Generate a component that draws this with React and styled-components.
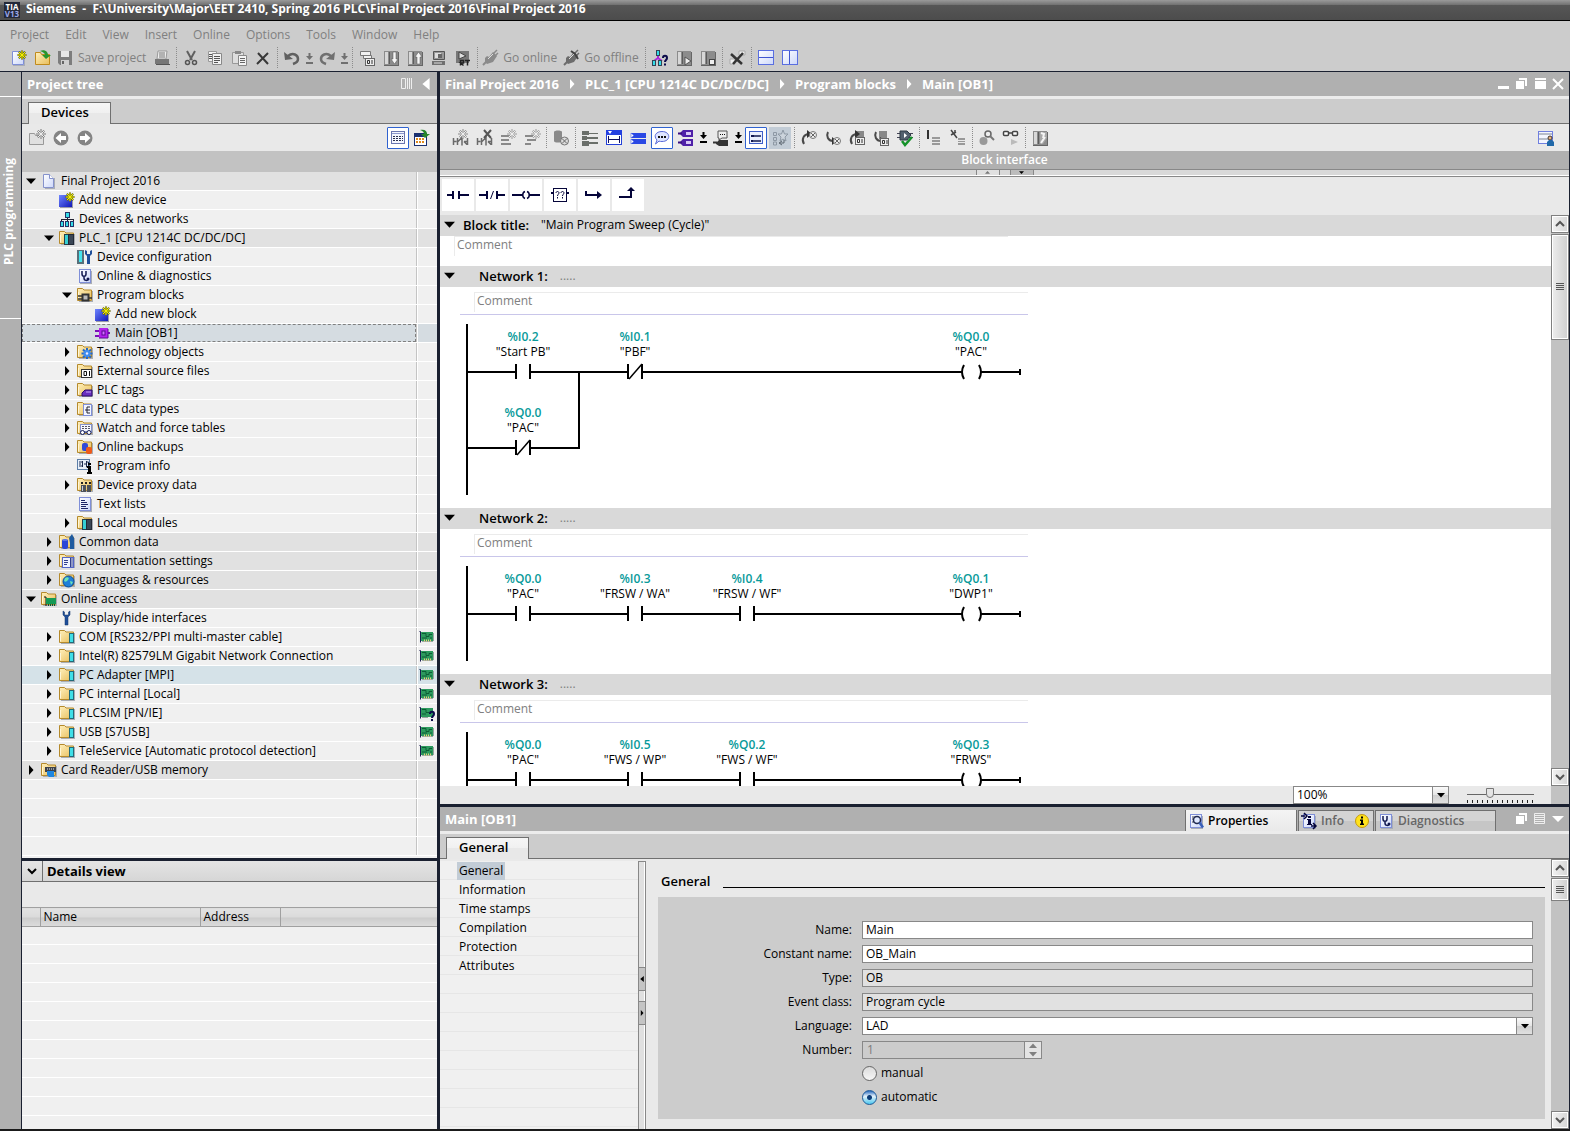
import React, { useState } from "react";
import styled, { createGlobalStyle, css } from "styled-components";

const MENU = [
  "Project",
  "Edit",
  "View",
  "Insert",
  "Online",
  "Options",
  "Tools",
  "Window",
  "Help",
];

const TREE = [
  { level: 0, open: true, icon: "page", label: "Final Project 2016", group: true },
  { level: 1, icon: "add", label: "Add new device" },
  { level: 1, icon: "network", label: "Devices & networks" },
  { level: 1, open: true, icon: "plc", label: "PLC_1 [CPU 1214C DC/DC/DC]", group: true, strong: true },
  { level: 2, icon: "config", label: "Device configuration" },
  { level: 2, icon: "diag", label: "Online & diagnostics" },
  { level: 2, open: true, icon: "blocks", label: "Program blocks" },
  { level: 3, icon: "add", label: "Add new block" },
  { level: 3, icon: "ob", label: "Main [OB1]", selected: true },
  { level: 2, open: false, icon: "tech", label: "Technology objects" },
  { level: 2, open: false, icon: "source", label: "External source files" },
  { level: 2, open: false, icon: "tags", label: "PLC tags" },
  { level: 2, open: false, icon: "types", label: "PLC data types" },
  { level: 2, open: false, icon: "watch", label: "Watch and force tables" },
  { level: 2, open: false, icon: "backup", label: "Online backups" },
  { level: 2, icon: "info", label: "Program info" },
  { level: 2, open: false, icon: "proxy", label: "Device proxy data" },
  { level: 2, icon: "text", label: "Text lists" },
  { level: 2, open: false, icon: "plc", label: "Local modules" },
  { level: 1, open: false, icon: "common", label: "Common data", group: true },
  { level: 1, open: false, icon: "docs", label: "Documentation settings", group: true },
  { level: 1, open: false, icon: "globe", label: "Languages & resources", group: true },
  { level: 0, open: true, icon: "access", label: "Online access", group: true },
  { level: 1, icon: "wrench", label: "Display/hide interfaces" },
  { level: 1, open: false, icon: "iface", label: "COM [RS232/PPI multi-master cable]", card: "card" },
  { level: 1, open: false, icon: "iface", label: "Intel(R) 82579LM Gigabit Network Connection", card: "card" },
  { level: 1, open: false, icon: "iface", label: "PC Adapter [MPI]", card: "card", hover: true },
  { level: 1, open: false, icon: "iface", label: "PC internal [Local]", card: "card" },
  { level: 1, open: false, icon: "iface", label: "PLCSIM [PN/IE]", card: "cardUnknown" },
  { level: 1, open: false, icon: "iface", label: "USB [S7USB]", card: "card" },
  { level: 1, open: false, icon: "iface", label: "TeleService [Automatic protocol detection]", card: "card" },
  { level: 0, open: false, icon: "reader", label: "Card Reader/USB memory", group: true },
  { level: 0, label: "" },
  { level: 0, label: "" },
  { level: 0, label: "" },
  { level: 0, label: "" },
];

const NETWORKS = [
  {
    id: 1,
    height: 193,
    rail: 180,
    rungs: [
      {
        y: 57,
        end: 560,
        items: [
          { x: 63, type: "no", address: "%I0.2", tag: "Start PB" },
          { x: 175, type: "nc", address: "%I0.1", tag: "PBF" },
          { x: 511, type: "coil", address: "%Q0.0", tag: "PAC" },
        ],
      },
      {
        y: 133,
        end: 119,
        joinTo: 57,
        items: [{ x: 63, type: "nc", address: "%Q0.0", tag: "PAC" }],
      },
    ],
  },
  {
    id: 2,
    height: 117,
    rail: 104,
    rungs: [
      {
        y: 57,
        end: 560,
        items: [
          { x: 63, type: "no", address: "%Q0.0", tag: "PAC" },
          { x: 175, type: "no", address: "%I0.3", tag: "FRSW / WA" },
          { x: 287, type: "no", address: "%I0.4", tag: "FRSW / WF" },
          { x: 511, type: "coil", address: "%Q0.1", tag: "DWP1" },
        ],
      },
    ],
  },
  {
    id: 3,
    height: 117,
    rail: 104,
    rungs: [
      {
        y: 57,
        end: 560,
        items: [
          { x: 63, type: "no", address: "%Q0.0", tag: "PAC" },
          { x: 175, type: "no", address: "%I0.5", tag: "FWS / WP" },
          { x: 287, type: "no", address: "%Q0.2", tag: "FWS / WF" },
          { x: 511, type: "coil", address: "%Q0.3", tag: "FRWS" },
        ],
      },
    ],
  },
];

const NAV = [
  "General",
  "Information",
  "Time stamps",
  "Compilation",
  "Protection",
  "Attributes",
];

/* ---------- icons, all on a 16 x 16 grid ---------- */

const folder = (
  <>
    <path d="M2 15h14V4h-1v10H2z" fill="#a9adb5" />
    <path d="M.5 13.500V1.500h5l1.500 1.500h7.500v10.500z" fill="url(#gFolder)" stroke="#b58a2c" />
    <path d="M1.500 12.500V5" stroke="#fff6d8" fill="none" />
  </>
);

const sheet = (
  <>
    <path d="M3 16h12V3h-1v12H3z" fill="#a9adb5" />
    <rect x="2.500" y="1.500" width="11" height="13" fill="url(#gSheet)" stroke="#7f8fd8" />
  </>
);

const spark = (x, y, color = "#f4f000", edge = "#6a6a10") => (
  <g transform={`translate(${x} ${y})`}>
    <path d="M0-4.500V4.500M-4.500 0H4.500M-3.200-3.200L3.200 3.200M3.200-3.200L-3.200 3.200" stroke={edge} strokeWidth="2" />
    <path d="M0-4V4M-4 0H4M-3-3L3 3M3-3L-3 3" stroke={color} strokeWidth="1" />
  </g>
);

const grayBars = (
  <path d="M1 5h10v2H1zM1 9h8v2H1zM1 13h10v2H1z" fill="#8a8a8a" />
);

const moduleBox = (
  <>
    <path d="M1 1h14v14H1z" fill="#8c8c8c" />
    <path d="M2 2h3v12H2z" fill="#d8d8d8" />
    <path d="M6 2h1v12H6z" fill="#5c5c5c" />
    <path d="M1 15h14v1H1zM15 2h1v14h-1z" fill="#666" />
  </>
);

const curve = (down) => (
  <>
    <path d={down ? "M3 2C1 6 3 11 8 11" : "M3 14C0 9 3 4 8 4"} stroke="#4a4a4a" strokeWidth="2" fill="none" />
    <path d={down ? "M7 7l5 4-5 4z" : "M6 0l5 4-5 4z"} fill="#333" />
  </>
);

const plug = (color) => (
  <>
    <path d="M1 15l4-4" stroke={color} strokeWidth="2" />
    <path d="M3 8l2-2 2 1 4-5 4 4-4 6-6 2-2-2z" fill={color} />
    <path d="M11 4l4-4M13 6l3-3" stroke={color} strokeWidth="1.500" />
    <path d="M6 9l5-5" stroke="#ddd" />
  </>
);

const ART = {
  page: (
    <>
      <path d="M4 16h10V5h-1v10H4z" fill="#a9adb5" />
      <path d="M2.500 1.500h6l4 4v9h-10z" fill="url(#gSheet)" stroke="#8592cc" />
      <path d="M8.500 1.500v4h4" fill="#fff" stroke="#8592cc" />
    </>
  ),
  add: (
    <>
      <path d="M1 15h12V6h1v10H1z" fill="#9a9aa8" />
      <rect x="0" y="3" width="13" height="12" fill="url(#gBlue)" />
      {spark(11, 5)}
    </>
  ),
  network: (
    <g shapeRendering="crispEdges">
      <path d="M8 5v4M2 11V8h12v3M8 8v3" stroke="#223" fill="none" />
      <rect x="6" y="1" width="4" height="5" fill="#35dce8" stroke="#236" />
      <rect x="1" y="10" width="3" height="5" fill="#35dce8" stroke="#236" />
      <rect x="6" y="10" width="3" height="5" fill="#35dce8" stroke="#236" />
      <rect x="11" y="10" width="3" height="5" fill="#35dce8" stroke="#236" />
    </g>
  ),
  plc: (
    <>
      {folder}
      <rect x="5.500" y="4.500" width="4" height="10" fill="#37cfd4" stroke="#27404a" />
      <rect x="9.500" y="4.500" width="5" height="10" fill="#3a4656" stroke="#222a36" />
    </>
  ),
  config: (
    <>
      <rect x="0" y="1" width="7" height="14" fill="#57707a" />
      <rect x="2" y="2" width="3" height="11" fill="#45e4ee" />
      <path d="M8 1v4l2 2v8h3V7l2-2V1l-2 1v3h-3V2z" fill="#1f4f9a" />
    </>
  ),
  diag: (
    <>
      {sheet}
      <path d="M5 3v3c0 3 4 3 4 0V3M7 8v2c0 3 4 3 4 1" stroke="#111850" strokeWidth="1.500" fill="none" />
      <circle cx="11" cy="11" r="1.500" fill="#111850" />
    </>
  ),
  blocks: (
    <>
      {folder}
      <path d="M1 9h4M1 12h4M12 11h3" stroke="#333" strokeWidth="1.500" />
      <rect x="5.500" y="7.500" width="6" height="6" fill="#bbb" stroke="#333" strokeWidth="2" />
    </>
  ),
  ob: (
    <>
      <path d="M0 5h5v2H0zM0 10h5v2H0zM12 7h3v2h-3z" fill="#7a10b8" />
      <rect x="4" y="3" width="9" height="10" fill="#b321ee" />
      <path d="M4 13h9V4" stroke="#5a0a90" fill="none" />
      <rect x="7" y="6" width="3" height="4" fill="#d070ff" stroke="#5a0a90" />
    </>
  ),
  tech: (
    <>
      {folder}
      <path d="M10 4v11M4.500 9.500h11M6 5.500l8 8M14 5.500l-8 8" stroke="#2468c8" strokeWidth="2" />
      <circle cx="10" cy="9.500" r="3.500" fill="#3f8df0" />
      <circle cx="10" cy="9.500" r="1.200" fill="#eef" />
    </>
  ),
  source: (
    <>
      {folder}
      <rect x="4.500" y="6.500" width="10" height="8" fill="#fff" stroke="#333" />
      <path d="M7 8.500h2.500v4H7zM12.500 8v5" stroke="#111" fill="none" />
    </>
  ),
  tags: (
    <>
      {folder}
      <path d="M5 11l3-3h7v6H5z" fill="#6a2fc0" stroke="#2c0f66" />
      <path d="M9 10h5" stroke="#c5a5f2" />
    </>
  ),
  types: (
    <>
      {folder}
      <rect x="6.500" y="3.500" width="8" height="11" fill="#f2f5ff" stroke="#7f8fd8" />
      <path d="M8 9h2M10 6v6M10 6h3M10 9h3M10 12h3" stroke="#223" />
    </>
  ),
  watch: (
    <>
      {folder}
      <rect x="3.500" y="4.500" width="11" height="8" fill="#f5f7ff" stroke="#8592cc" />
      <path d="M5 6.500h8M5 8.500h8" stroke="#556" strokeDasharray="2 1" />
      <circle cx="5.500" cy="12.500" r="2" fill="#fff" stroke="#15205c" />
      <circle cx="12" cy="12.500" r="2" fill="#fff" stroke="#15205c" />
      <path d="M7 12h3" stroke="#15205c" />
    </>
  ),
  backup: (
    <>
      {folder}
      <rect x="5" y="4" width="6" height="8" rx="2" fill="#3048d8" />
      <rect x="9" y="8" width="6" height="7" rx="2" fill="#ee5a1c" />
    </>
  ),
  info: (
    <>
      <rect x=".5" y="1.500" width="12" height="10" fill="#e8f0fa" stroke="#5c7ea8" />
      <path d="M2 4h3M2 6h2M2 8h3M5.500 3v6M7 6h2M9.500 3v6h2V4h-2" stroke="#1a2a50" fill="none" />
      <path d="M11 5h3v2h-3zM10 8h4v6h1v2h-5v-2h1v-4h-1z" fill="#000" />
    </>
  ),
  proxy: (
    <>
      {folder}
      <path d="M4 5h2v2H4zM8 5h2v2H8zM12 5h2v2h-2z" fill="#222" />
      <path d="M4 8h5v7H4zM10 8h4v7h-4z" fill="#4c525a" />
      <path d="M5 9h1v5H5z" fill="#c9ced6" />
    </>
  ),
  text: (
    <>
      {sheet}
      <path d="M4 4.500h4M4 6.500h6M4 8.500h7M4 10.500h5M4 12.500h7" stroke="#1c2466" />
    </>
  ),
  common: (
    <>
      {folder}
      <rect x="3" y="5" width="6" height="10" rx="2" fill="#2b46d6" />
      <path d="M4 6h4" stroke="#8ea2f5" />
      <path d="M10 4l3-4 2 4v11h-4V9z" fill="#1f5ba0" />
    </>
  ),
  docs: (
    <>
      {folder}
      <rect x="3.500" y="4.500" width="11" height="10" fill="#eef2ff" stroke="#5466c8" />
      <path d="M5 7.500h4M5 9.500h4M5 11.500h3M11.500 5v9M13 5v9" stroke="#33408c" />
    </>
  ),
  globe: (
    <>
      {folder}
      <circle cx="9.500" cy="9.500" r="5.500" fill="#1f7fd8" stroke="#0d4c94" />
      <path d="M6 6c3-2 5 0 3 2S7 10 5 9zM11 9l3 1-2 3z" fill="#6fe3b4" />
    </>
  ),
  access: (
    <>
      {folder}
      <path d="M3 6h2v9" stroke="#111" fill="none" />
      <rect x="5" y="7" width="10" height="6" fill="#159a55" />
      <path d="M7 14h8" stroke="#0a5a30" strokeDasharray="1 1" strokeWidth="2" />
    </>
  ),
  wrench: (
    <path d="M4 1v4l2 2v8h3V7l2-2V1L9.500 2v3h-4V2z" fill="#1f4f9a" stroke="#123468" strokeWidth=".5" />
  ),
  iface: (
    <>
      {folder}
      <rect x="10.500" y="4.500" width="4" height="9" fill="#3fdfe8" stroke="#226a78" />
    </>
  ),
  reader: (
    <>
      {folder}
      <path d="M4 5h11v5H4z" fill="#3c424c" />
      <path d="M6 7h8" stroke="#e8edf4" strokeDasharray="1 1" />
      <path d="M6 9h7v6H8l-2-2z" fill="#1e86e0" />
    </>
  ),
  card: (
    <>
      <path d="M.5 2.500h1v11" stroke="#1a1a50" fill="none" />
      <path d="M3 12h12V4h-1v9H3z" fill="#9aa5a0" />
      <rect x="2" y="3" width="12" height="9" fill="#2c9a5e" />
      <path d="M3 4.500h4v3h3v-2h3M3 9h5M11 9h2" stroke="#0d5c34" fill="none" />
      <path d="M5 11.500h8" stroke="#e2d27a" strokeWidth="2" strokeDasharray="1 1" />
    </>
  ),
  cardUnknown: (
    <>
      <path d="M.5 2.500h1v11" stroke="#1a1a50" fill="none" />
      <path d="M3 12h6v1H3z" fill="#9aa5a0" />
      <rect x="2" y="3" width="12" height="9" fill="#2c9a5e" />
      <path d="M3 4.500h4v3h3M3 9h4" stroke="#0d5c34" fill="none" />
      <path d="M11 9c0-3 4-3 4 0 0 2-2 2-2 4M13 14v2" stroke="#0b0b4a" strokeWidth="2" fill="none" />
    </>
  ),
  newProject: (
    <>
      <path d="M2 16h12V6h-1v9H2z" fill="#a9adb5" />
      <path d="M1.500 1.500h11v13h-11z" fill="url(#gSheet)" stroke="#7f8fd8" />
      {spark(11, 5)}
    </>
  ),
  openProject: (
    <>
      <path d="M.5 14.500V2.500h5l1 2h8v10z" fill="url(#gFolder)" stroke="#c08a1c" />
      <path d="M5 1c5-2 8 1 8 4h3l-5 4-4-4h3c0-2-2-3-5-4z" fill="#28962c" />
    </>
  ),
  save: (
    <>
      <path d="M1 1h14v14H3l-2-2z" fill="#7d7d7d" />
      <path d="M4 1h8v6H4z" fill="#e6e6e6" />
      <path d="M4 10h8v5H4z" fill="#d0d0d0" />
      <path d="M5 11h2v3H5z" fill="#666" />
    </>
  ),
  print: (
    <>
      <path d="M4 1h9l-1 8H3z" fill="#eee" stroke="#999" />
      <path d="M5 3h6M5 5h6M5 7h6" stroke="#777" />
      <path d="M1 9h14v5H1z" fill="#777" />
      <path d="M2 14h14v1H2z" fill="#555" />
    </>
  ),
  cut: (
    <>
      <path d="M4 1l5 9M12 1L7 10" stroke="#606060" strokeWidth="2" />
      <circle cx="4.500" cy="12.500" r="2" stroke="#555" strokeWidth="1.500" fill="none" />
      <circle cx="11.500" cy="12.500" r="2" stroke="#555" strokeWidth="1.500" fill="none" />
    </>
  ),
  copy: (
    <>
      <path d="M1.500 1.500h8v10h-8z" fill="#f2f2f2" stroke="#999" />
      <path d="M5.500 3.500h9v11h-9z" fill="#f2f2f2" stroke="#888" />
      <path d="M7 6.500h6M7 8.500h6M7 10.500h6M7 12.500h4M2 4.500h3M2 6.500h3M2 8.500h3" stroke="#555" />
    </>
  ),
  paste: (
    <>
      <path d="M1.500 2.500h11v11h-11z" fill="#dedede" stroke="#999" />
      <path d="M4 1h6v3H4z" fill="#888" />
      <path d="M7.500 5.500h8v10h-8z" fill="#f4f4f4" stroke="#888" />
      <path d="M9 8.500h5M9 10.500h5M9 12.500h5" stroke="#666" />
    </>
  ),
  remove: (
    <path d="M3 3l10 11M13 3L2 14" stroke="#383838" strokeWidth="2" />
  ),
  undo: (
    <>
      <path d="M4 6c5-4 10-1 10 3 0 2-2 4-5 5" stroke="#606060" strokeWidth="2.500" fill="none" />
      <path d="M0 2l1 8 8-1z" fill="#606060" />
    </>
  ),
  redo: (
    <>
      <path d="M12 6C7 2 2 5 2 9c0 2 2 4 5 5" stroke="#707070" strokeWidth="2.500" fill="none" />
      <path d="M16 2l-1 8-8-1z" fill="#707070" />
    </>
  ),
  compile: (
    <>
      <path d="M1.500 1.500h10v4h-10zM4.500 5.500h8v3h-8z" fill="#f0f0f0" stroke="#777" />
      <rect x="6.500" y="8.500" width="9" height="7" fill="#eee" stroke="#666" />
      <path d="M8.500 10.500h2v3h-2zM13 10v4" stroke="#333" fill="none" />
    </>
  ),
  download: (
    <>
      {moduleBox}
      <path d="M10 2h3v7h2l-3.500 5L8 9h2z" fill="#f6f6f6" stroke="#555" strokeWidth=".5" />
    </>
  ),
  upload: (
    <>
      {moduleBox}
      <path d="M10 14h3V7h2l-3.500-5L8 7h2z" fill="#f6f6f6" stroke="#555" strokeWidth=".5" />
    </>
  ),
  simulate: (
    <>
      <path d="M2.500 1.500h11v8h-11z" fill="#999" stroke="#555" />
      <path d="M4 3h6v5H4z" fill="#ddd" />
      <path d="M7 4h4v4H7z" fill="#666" />
      <path d="M1 11h13v4H1z" fill="#707070" />
      <path d="M3 13h8" stroke="#ddd" />
    </>
  ),
  runtime: (
    <>
      <path d="M1 1h13v12H1z" fill="#777" />
      <path d="M4 2l7 4-7 3z" fill="#ddd" stroke="#444" />
      <path d="M5.500 15.500v-5h3v2.500h-3l3 2.500M10 10.500h5M12.500 10.500v5" stroke="#222" strokeWidth="1.500" fill="none" />
    </>
  ),
  online: plug("#8a8a8a"),
  offline: (
    <>
      {plug("#6c6c6c")}
      <path d="M8 1l4 3 3 5" stroke="#444" strokeWidth="2" fill="none" />
    </>
  ),
  accessible: (
    <>
      <path d="M6 5v4M2 11l4-3 4 3" stroke="#a62ad8" strokeWidth="2" fill="none" />
      <rect x="4.500" y=".5" width="3" height="5" fill="#35dce8" stroke="#345" />
      <rect x=".5" y="10.500" width="3" height="5" fill="#35dce8" stroke="#345" />
      <rect x="6.500" y="10.500" width="3" height="5" fill="#35dce8" stroke="#345" />
      <path d="M11 8c0-3 4-3 4 0 0 2-2 2-2 4M13 13.500v2" stroke="#0b0b4a" strokeWidth="2" fill="none" />
    </>
  ),
  startCpu: (
    <>
      {moduleBox}
      <path d="M9 7l6 4-6 4z" fill="#eee" stroke="#555" />
    </>
  ),
  stopCpu: (
    <>
      {moduleBox}
      <rect x="9.500" y="9.500" width="5" height="5" fill="#eee" stroke="#444" />
    </>
  ),
  cross: (
    <>
      <path d="M10 1h6v4h-6zM1 9h5v5H1z" fill="#eee" stroke="#aaa" />
      <path d="M2 4l11 10M14 3L4 14" stroke="#333" strokeWidth="2.500" />
    </>
  ),
  splitH: (
    <>
      <rect x=".5" y=".5" width="15" height="14" fill="url(#gSheet)" stroke="#5a6fe0" />
      <path d="M1 7.500h14" stroke="#4055d0" />
    </>
  ),
  splitV: (
    <>
      <rect x=".5" y=".5" width="15" height="14" fill="url(#gSheet)" stroke="#5a6fe0" />
      <path d="M7.500 1v13" stroke="#4055d0" />
    </>
  ),
  newFolder: (
    <>
      <path d="M.5 14.500V3.500h5l1 2h8v9z" fill="#e0e0e0" stroke="#999" />
      {spark(12, 4, "#eee", "#777")}
    </>
  ),
  back: (
    <>
      <circle cx="8" cy="8" r="7.500" fill="#848484" />
      <path d="M8 3v3h5v4H8v3L2.500 8z" fill="#fff" />
    </>
  ),
  forward: (
    <>
      <circle cx="8" cy="8" r="7.500" fill="#848484" />
      <path d="M8 3v3H3v4h5v3l5.500-5z" fill="#fff" />
    </>
  ),
  listView: (
    <>
      <rect x="1.500" y="1.500" width="13" height="12" fill="#f4f6ff" stroke="#6a76b0" />
      <path d="M2 3.500h12" stroke="#8c98cc" />
      <path d="M3 6.500h10M3 8.500h10M3 10.500h10" stroke="#2a3050" strokeDasharray="2 1" />
    </>
  ),
  goTable: (
    <>
      <rect x=".5" y="3.500" width="12" height="12" fill="#fff" stroke="#1a3070" />
      <path d="M1 5.500h11" stroke="#1a3070" strokeWidth="3" />
      <path d="M2 9h9M2 12h9" stroke="#e08a1c" strokeWidth="2" strokeDasharray="2 1" />
      <path d="M6 0c5-1 7 1 7 4h3l-5 4-4-4h3c0-2-1-3-4-4z" fill="#28862c" />
    </>
  ),
  insNet: (
    <>
      <path d="M1.500 8v7M1.500 11.500h3M5.500 8v7M6 11.500l4-4v8M12 11.500h3M15.500 8v7M12 11.500l3 3" stroke="#6a6a6a" strokeWidth="1.500" fill="none" />
      {spark(11, 4, "#eee", "#888")}
    </>
  ),
  delNet: (
    <>
      <path d="M1.500 8v7M1.500 11.500h3M5.500 8v7M6 11.500l4-4v8M12 11.500h3M15.500 8v7M12 11.500l3 3" stroke="#6a6a6a" strokeWidth="1.500" fill="none" />
      <path d="M8 0l7 8M15 0L8 8" stroke="#555" strokeWidth="2" />
    </>
  ),
  insRow: (
    <>
      {grayBars}
      {spark(12, 4, "#eee", "#999")}
    </>
  ),
  addRow: (
    <>
      <path d="M1 5h8v2H1zM3 9h9v2H3zM1 13h6v2H1z" fill="#8a8a8a" />
      {spark(12, 4, "#eee", "#999")}
    </>
  ),
  reset: (
    <>
      <path d="M1 2c0-2 8-2 8 0v9c0 2-8 2-8 0z" fill="#8a8a8a" />
      <circle cx="11.500" cy="11" r="4" fill="#ddd" stroke="#777" />
      <path d="M9 8.500l5 5M14 8.500l-5 5" stroke="#666" />
    </>
  ),
  lines: (
    <path d="M0 1h7v2h9v1H7v1H0zM0 6h5v1h11v2H5v1H0zM0 11h7v1h9v2H7v2H0z" fill="#6a6f6a" />
  ),
  openAll: (
    <>
      <rect x=".5" y=".5" width="15" height="14" fill="#fff" stroke="#2440d8" />
      <path d="M0 0h16v5H0z" fill="#2440e0" />
      <path d="M2 1h4L4 4z" fill="#fff" />
      <path d="M2.500 6v7M13.500 6v7M3 9.500h10" stroke="#101060" />
    </>
  ),
  closeAll: (
    <>
      <path d="M1 3h15v5H1zM1 9h15v5H1z" fill="#2a48e4" />
      <path d="M1 3l3 2.500L1 8zM1 9l3 2.500L1 14z" fill="#fff" stroke="#2a48e4" strokeWidth=".5" />
    </>
  ),
  comments: (
    <>
      <path d="M8 1.500c9 0 9 10 0 10-1 0-2 0-3-.4L1.500 14 3 10C-1 6 2 1.500 8 1.500z" fill="#dfe5ff" stroke="#5a6ad8" />
      <path d="M4 6h2v2H4zM7 6h2v2H7zM10 6h2v2h-2z" fill="#111" />
    </>
  ),
  operands: (
    <>
      <path d="M2 3l3-3h10v7H5L2 4zM2 12l3-3h10v7H5l-3-3z" fill="#4f20a8" />
      <path d="M0 3.500h4M0 12.500h4" stroke="#3a1080" strokeWidth="2" />
      <path d="M8 2h5v3H8zM8 11h5v3H8z" fill="#d8c8f6" />
    </>
  ),
  opComment: (
    <>
      <path d="M5 1h9v7H9l-3 2V8H5z" fill="#eee" stroke="#555" />
      <path d="M7 4h1v1H7zM9 4h1v1H9zM11 4h1v1h-1z" fill="#111" />
      <path d="M3 13l3-3h9v6H6l-3-2z" fill="#333" />
      <path d="M0 12.500h4" stroke="#333" strokeWidth="2" />
    </>
  ),
  favorites: (
    <>
      <rect x="1.500" y="1.500" width="13" height="12" fill="#eaf0ff" stroke="#4060c8" />
      <path d="M3 5h3v2H3zM3 10h2v2H3z" fill="#111850" />
      <path d="M6 6h7M5 11h8" stroke="#111850" strokeWidth="1.500" />
    </>
  ),
  star: (
    <>
      <path d="M1.500 2.500h3v3h-3zM1.500 7.500h3v3h-3zM1.500 12h3v3h-3z" fill="none" stroke="#8d98a4" />
      <path d="M11 0l1.500 4H16l-3 3 1 4-3-2-3 2 1-4-3-3h3.500z" fill="#ccd4dc" stroke="#8d98a4" />
      <path d="M12 10v3H8M10 11l-3 2 3 2" stroke="#5c6670" fill="none" />
    </>
  ),
  prevErr: (
    <>
      {curve(false)}
      <circle cx="12" cy="5" r="3.500" fill="#eee" stroke="#777" />
      <path d="M10 3l4 4M14 3l-4 4" stroke="#666" />
    </>
  ),
  nextErr: (
    <>
      {curve(true)}
      <circle cx="12" cy="11" r="3.500" fill="#eee" stroke="#777" />
      <path d="M10 9l4 4M14 9l-4 4" stroke="#666" />
    </>
  ),
  prevUse: (
    <>
      <path d="M7 1h8v10H7z" fill="#888" />
      {curve(false)}
      <rect x="6.500" y="7.500" width="9" height="7" fill="#eee" stroke="#666" />
      <path d="M8.500 9.500h2v3h-2zM13 9v4" stroke="#333" fill="none" />
    </>
  ),
  nextUse: (
    <>
      <path d="M6 1h8v8H6z" fill="#888" />
      {curve(true)}
      <rect x="7.500" y="8.500" width="8" height="7" fill="#eee" stroke="#666" />
      <path d="M9.500 10.500h2v3h-2zM14 10v4" stroke="#333" fill="none" />
    </>
  ),
  check: (
    <>
      <path d="M0 3h16v1H0zM0 7h16v1H0z" fill="#445" />
      <path d="M3 1h7l4 4-4 5H3z" fill="#52606e" stroke="#2c3844" />
      <path d="M7 3l3 2.500L7 8z" fill="#fff" />
      <path d="M5 11l3 4 7-8" stroke="#15922a" strokeWidth="2.500" fill="none" />
    </>
  ),
  goto: (
    <>
      <path d="M1 0h2v9H1z" fill="#333" />
      <path d="M6 7h8v2H6zM6 10h8v2H6zM6 13h8v2H6z" fill="#999" />
    </>
  ),
  gotoCut: (
    <>
      <path d="M1 0l6 8M1 5l5-3M5 0v3" stroke="#444" strokeWidth="1.500" />
      <path d="M8 8h7v2H8zM8 11h7v1H8zM8 13h7v2H8z" fill="#999" />
    </>
  ),
  search: (
    <>
      <circle cx="4.500" cy="11" r="4" fill="#999" />
      <circle cx="9" cy="4" r="3" fill="#eee" stroke="#666" strokeWidth="1.500" />
      <path d="M11 6l4 4" stroke="#777" strokeWidth="2" />
    </>
  ),
  monitor: (
    <>
      <rect x=".5" y="1.500" width="5" height="4" rx="1" fill="#fff" stroke="#444" strokeWidth="1.500" />
      <rect x="9.500" y="1.500" width="5" height="4" rx="1" fill="#fff" stroke="#444" strokeWidth="1.500" />
      <path d="M6 3h4" stroke="#444" strokeWidth="1.500" />
      <path d="M8 9l7 3-7 3z" fill="#bbb" />
    </>
  ),
  transfer: (
    <>
      {moduleBox}
      <path d="M8 2h7v6l-4 6H8z" fill="#a8a8a8" />
      <path d="M9 13l4-6M9 3l3 1-1 4" stroke="#f5f5f5" strokeWidth="2" fill="none" />
    </>
  ),
  user: (
    <>
      <rect x=".5" y="1.500" width="14" height="12" fill="#f4f6ff" stroke="#6f7fe0" />
      <path d="M1 4h13M1 9h9" stroke="#7a8494" />
      <circle cx="12" cy="8" r="2" fill="#e8b080" stroke="#111" strokeWidth=".8" />
      <path d="M9 16v-4l2-2h3l2 2v4z" fill="#2068a8" />
    </>
  ),
  contactNo: (
    <path d="M-3 7h5v2h-5zM2 4h2v8H2zM8 4h2v8H8zM10 7h9v2h-9z" fill="#05053a" />
  ),
  contactNc: (
    <>
      <path d="M-5 7h7v2h-7zM2 4h2v8H2zM12 4h2v8h-2zM14 7h7v2h-7z" fill="#05053a" />
      <path d="M6.500 12l3-8" stroke="#05053a" />
    </>
  ),
  coilBtn: (
    <>
      <path d="M-6 7h11v2H-6zM11 7h11v2H11z" fill="#05053a" />
      <path d="M7 4.500c-3 1-3 6 0 7M9 4.500c3 1 3 6 0 7" stroke="#05053a" strokeWidth="1.500" fill="none" />
    </>
  ),
  emptyBox: (
    <>
      <rect x="1.500" y="1.500" width="13" height="13" fill="#fff" stroke="#05053a" />
      <path d="M-1 5h2v2h-2zM15 5h2v2h-2z" fill="#05053a" />
      <path d="M4 6c0-2 3-2 3 0 0 1.500-1.500 1-1.500 3M5.500 10v1.500M9 6c0-2 3-2 3 0 0 1.500-1.500 1-1.500 3M10.500 10v1.500" stroke="#05053a" fill="none" />
    </>
  ),
  openBranch: (
    <path d="M-1 4h2v3h10V4l5 4-5 4V9H-1z" fill="#05053a" />
  ),
  closeBranch: (
    <path d="M-1 9h11V4H7l4-4 4 4h-3v7H-1z" fill="#05053a" />
  ),
  propTab: (
    <>
      {sheet}
      <path d="M4 4h4M4 6h3M4 9h3" stroke="#445" />
      <circle cx="9" cy="7" r="3.500" fill="#dfe8ff" stroke="#222a50" strokeWidth="1.500" />
      <path d="M11.500 9.500l3.500 5" stroke="#3a60b8" strokeWidth="2.500" />
    </>
  ),
  infoTab: (
    <>
      {sheet}
      <path d="M0 3h4M3 0l3 3-3 3M10 13h4M12 10l3 3-3 3" stroke="#05053a" strokeWidth="1.500" fill="none" />
      <path d="M7 3h3v2H7zM6 6h4v5h1v1H6v-1h1V7H6z" fill="#05053a" />
    </>
  ),
  infoBadge: (
    <>
      <circle cx="8" cy="8" r="6.500" fill="#ffe21c" stroke="#c49a10" />
      <path d="M7 3.500h2v2H7zM6 6.500h3v4h1v1.500H6v-1.500h1V8H6z" fill="#000" />
    </>
  ),
};

const Icon = ({ name }) => (
  <IconSvg viewBox="0 0 16 16" aria-hidden="true">
    {ART[name]}
  </IconSvg>
);

const Triangle = ({ dir, size = 10, color = "#000" }) => {
  const paths = {
    down: "M0 2.500h10L5 8z",
    up: "M0 7.500h10L5 2z",
    right: "M3 0l4.500 5L3 10z",
    left: "M8 0L2 5l6 5z",
  };
  return (
    <svg width={size} height={size} viewBox="0 0 10 10" aria-hidden="true">
      <path d={paths[dir]} fill={color} />
    </svg>
  );
};

const Chevron = ({ dir, color = "#555" }) => (
  <svg width="12" height="12" viewBox="0 0 12 12" aria-hidden="true">
    <path d={dir === "up" ? "M2 8l4-4 4 4" : "M2 4l4 4 4-4"} stroke={color} strokeWidth="2" fill="none" />
  </svg>
);

const Tool = ({ name, label, boxed, filled }) => (
  <ToolBtn type="button" aria-label={label} $boxed={boxed} $filled={filled}>
    <Icon name={name} />
  </ToolBtn>
);

const More = ({ color }) => (
  <MoreBtn type="button" aria-label="More">
    <svg width="7" height="11" viewBox="0 0 7 11" aria-hidden="true">
      <path d="M2.500 0h2v3H7L3.500 7 0 3h2.500zM0 9h7v2H0z" fill={color} />
    </svg>
  </MoreBtn>
);

const Scroll = ({ thumb }) => (
  <ScrollBar>
    <ScrollBtn type="button" aria-label="Scroll up">
      <Chevron dir="up" />
    </ScrollBtn>
    <Thumb $height={thumb}>
      <svg width="8" height="8" viewBox="0 0 8 8" aria-hidden="true">
        <path d="M0 .5h8M0 2.500h8M0 4.500h8M0 6.500h8" stroke="#555" />
      </svg>
    </Thumb>
    <Spacer />
    <ScrollBtn type="button" aria-label="Scroll down">
      <Chevron dir="down" />
    </ScrollBtn>
  </ScrollBar>
);

const Element = ({ x, y, type, address, tag }) => (
  <g>
    <Address x={x} y={y - 31}>{address}</Address>
    <Tag x={x} y={y - 16}>{`"${tag}"`}</Tag>
    {type === "coil" ? (
      <path d={`M${x - 7} ${y - 7}q-4 7 0 14M${x + 8} ${y - 7}q4 7 0 14`} />
    ) : (
      <path d={`M${x - 7} ${y - 8}v15M${x + 7} ${y - 8}v15`} />
    )}
    {type === "nc" && <path d={`M${x - 6} ${y + 7}L${x + 7} ${y - 8}`} strokeWidth="1.500" />}
  </g>
);

const Ladder = ({ network }) => {
  const wire = (rung) => {
    let d = `M7 ${rung.y}`;
    rung.items.forEach(({ x, type }) => {
      const half = type === "coil" ? 9 : 7;
      d += `H${x - half}M${x + half} ${rung.y}`;
    });
    d += `H${rung.end}`;
    return rung.joinTo ? `${d}V${rung.joinTo}` : `${d}M${rung.end} ${rung.y - 3}v6`;
  };
  return (
    <LadderSvg width="568" height={network.height}>
      <path d={`M7 9V${network.rail}`} />
      {network.rungs.map((rung) => (
        <g key={rung.y}>
          <path d={wire(rung)} />
          {rung.items.map((item) => (
            <Element key={item.x} y={rung.y} {...item} />
          ))}
        </g>
      ))}
    </LadderSvg>
  );
};

const TreeItem = ({ item }) => (
  <TreeRow $group={item.group} $selected={item.selected} $hover={item.hover}>
    <TreeName $level={item.level} $selected={item.selected} $strong={item.strong}>
      <Expander>
        {item.open !== undefined && <Triangle dir={item.open ? "down" : "right"} size={10} />}
      </Expander>
      {item.icon && <Icon name={item.icon} />}
      <span>{item.label}</span>
    </TreeName>
    <TreeState>{item.card && <Icon name={item.card} />}</TreeState>
  </TreeRow>
);

const App = () => {
  const [zoom, setZoom] = useState(33);
  const [mode, setMode] = useState("automatic");
  const [name, setName] = useState("Main");
  const [constant, setConstant] = useState("OB_Main");

  return (
    <Root>
      <GlobalStyle />
      <TitleBar>
        <Logo viewBox="0 0 16 16">
          <defs>
            <linearGradient id="gFolder" x1="0" y1="0" x2="1" y2="1">
              <stop offset="0" stopColor="#fff0bc" />
              <stop offset="1" stopColor="#e8bd5a" />
            </linearGradient>
            <linearGradient id="gSheet" x1="0" y1="0" x2="1" y2="1">
              <stop offset="0" stopColor="#fff" />
              <stop offset="1" stopColor="#cdd8fa" />
            </linearGradient>
            <linearGradient id="gBlue" x1="0" y1="0" x2="1" y2="1">
              <stop offset="0" stopColor="#6f86ff" />
              <stop offset="1" stopColor="#1218b8" />
            </linearGradient>
          </defs>
          <rect width="16" height="16" fill="#232838" />
          <LogoText x="8" y="8" fill="#fff">TIA</LogoText>
          <LogoText x="8" y="15" fill="#9aa6e8">V13</LogoText>
        </Logo>
        <Title>
          {"Siemens  -  F:\\University\\Major\\EET 2410, Spring 2016 PLC\\Final Project 2016\\Final Project 2016"}
        </Title>
      </TitleBar>

      <MenuBar>
        {MENU.map((label) => (
          <MenuBtn type="button" key={label}>{label}</MenuBtn>
        ))}
      </MenuBar>
      <MainTools>
        <Tool name="newProject" label="New project" />
        <Tool name="openProject" label="Open project" />
        <LabelBtn type="button"><Icon name="save" />Save project</LabelBtn>
        <Tool name="print" label="Print" />
        <Sep />
        <Tool name="cut" label="Cut" />
        <Tool name="copy" label="Copy" />
        <Tool name="paste" label="Paste" />
        <Tool name="remove" label="Delete" />
        <Sep />
        <Tool name="undo" label="Undo" />
        <More color="#707070" />
        <Tool name="redo" label="Redo" />
        <More color="#707070" />
        <Sep />
        <Tool name="compile" label="Compile" />
        <Tool name="download" label="Download to device" />
        <Tool name="upload" label="Upload from device" />
        <Tool name="simulate" label="Start simulation" />
        <Tool name="runtime" label="Start runtime" />
        <Sep />
        <LabelBtn type="button"><Icon name="online" />Go online</LabelBtn>
        <LabelBtn type="button"><Icon name="offline" />Go offline</LabelBtn>
        <Sep />
        <Tool name="accessible" label="Accessible devices" />
        <Tool name="startCpu" label="Start CPU" />
        <Tool name="stopCpu" label="Stop CPU" />
        <Sep />
        <Tool name="cross" label="Cross-references" />
        <Sep />
        <Tool name="splitH" label="Split editor horizontally" />
        <Tool name="splitV" label="Split editor vertically" />
      </MainTools>

      <Workspace>
        <Strip>
          <StripTab type="button">PLC programming</StripTab>
        </Strip>

        <LeftColumn>
          <PanelHeader>
            <span>Project tree</span>
            <Spacer />
            <HeaderIcons>
              <svg width="12" height="12" viewBox="0 0 12 12" aria-hidden="true">
                <path d="M.5 .5h4v10h-4zM6.500 0v11M8.500 0v11M10.500 0v11" stroke="#eee" fill="none" />
              </svg>
              <Triangle dir="left" size={12} color="#fff" />
            </HeaderIcons>
          </PanelHeader>
          <TabStrip>
            <Tab type="button">Devices</Tab>
          </TabStrip>
          <Toolbar $tight>
            <Tool name="newFolder" label="New folder" />
            <Tool name="back" label="Back" />
            <Tool name="forward" label="Forward" />
            <Spacer />
            <Tool name="listView" label="Details view" boxed />
            <Tool name="goTable" label="Open overview" />
          </Toolbar>
          <TreeTop />
          <Tree>
            {TREE.map((item, i) => (
              <TreeItem key={i} item={item} />
            ))}
          </Tree>
          <DetailsHeader>
            <Fold type="button" aria-label="Collapse details">
              <Chevron dir="down" color="#000" />
            </Fold>
            Details view
          </DetailsHeader>
          <Details>
            <DetailsTable>
              <thead>
                <tr>
                  <Th $width="18px" aria-label="Type" />
                  <Th $width="160px">Name</Th>
                  <Th $width="80px">Address</Th>
                  <Th aria-label="Other" />
                </tr>
              </thead>
            </DetailsTable>
          </Details>
        </LeftColumn>

        <RightColumn>
          <Editor>
            <PanelHeader>
              <Crumbs>
                <span>Final Project 2016</span>
                <Triangle dir="right" size={10} color="#fff" />
                <span>PLC_1 [CPU 1214C DC/DC/DC]</span>
                <Triangle dir="right" size={10} color="#fff" />
                <span>Program blocks</span>
                <Triangle dir="right" size={10} color="#fff" />
                <span>Main [OB1]</span>
              </Crumbs>
              <Spacer />
              <svg width="66" height="12" viewBox="0 0 66 12" aria-label="Window buttons">
                <path d="M0 8h11v3H0zM18 3h8v8h-8zM21 0h8v8h-2V2h-6zM37 0h11v2H37zM37 3h11v8H37z" fill="#fff" />
                <path d="M55 1l10 10M65 1L55 11" stroke="#fff" strokeWidth="2" />
              </svg>
            </PanelHeader>
            <TabStrip />
            <Toolbar>
              <Tool name="insNet" label="Insert network" />
              <Tool name="delNet" label="Delete network" />
              <Tool name="insRow" label="Insert row" />
              <Tool name="addRow" label="Add row" />
              <Sep />
              <Tool name="reset" label="Reset start values" />
              <Sep />
              <Tool name="lines" label="Expanded mode" />
              <Tool name="openAll" label="Open all networks" />
              <Tool name="closeAll" label="Close all networks" />
              <Tool name="comments" label="Network comments" boxed />
              <Tool name="operands" label="Absolute/symbolic operands" />
              <More color="#000" />
              <Tool name="opComment" label="Operand comments" />
              <More color="#000" />
              <Tool name="favorites" label="Favorites in editor" boxed />
              <Tool name="star" label="Favorites" filled />
              <Sep />
              <Tool name="prevErr" label="Previous error" />
              <Tool name="nextErr" label="Next error" />
              <Tool name="prevUse" label="Previous use" />
              <Tool name="nextUse" label="Next use" />
              <Tool name="check" label="Update block calls" />
              <Sep />
              <Tool name="goto" label="Go to network" />
              <Tool name="gotoCut" label="Go to line" />
              <Sep />
              <Tool name="search" label="Search" />
              <Tool name="monitor" label="Monitoring on/off" />
              <Sep />
              <Tool name="transfer" label="Transfer" />
              <Spacer />
              <Tool name="user" label="Save window settings" />
            </Toolbar>
            <InterfaceBar>Block interface</InterfaceBar>
            <InterfaceSplit>
              <SplitNub type="button" aria-label="Close interface">
                <Triangle dir="up" size={5} color="#777" />
              </SplitNub>
              <SplitNub type="button" aria-label="Open interface" $dark>
                <Triangle dir="down" size={5} />
              </SplitNub>
            </InterfaceSplit>
            <Instructions>
              {["contactNo", "contactNc", "coilBtn", "emptyBox", "openBranch", "closeBranch"].map((icon) => (
                <Instruction type="button" key={icon} aria-label={icon}>
                  <Icon name={icon} />
                </Instruction>
              ))}
            </Instructions>
            <Canvas>
              <Networks>
                <Bar $indent="8px">
                  <Triangle dir="down" size={11} />
                  <strong>Block title:</strong>
                  <span>"Main Program Sweep (Cycle)"</span>
                </Bar>
                <BlockNote>
                  <Note placeholder="Comment" aria-label="Block comment" />
                </BlockNote>
                {NETWORKS.map((network) => (
                  <section key={network.id}>
                    <Bar $indent="24px">
                      <Triangle dir="down" size={11} />
                      <strong>Network {network.id}:</strong>
                      <Dots>.....</Dots>
                    </Bar>
                    <NetworkNote>
                      <Note placeholder="Comment" aria-label={`Network ${network.id} comment`} />
                    </NetworkNote>
                    <Ladder network={network} />
                  </section>
                ))}
              </Networks>
              <Scroll thumb="106px" />
            </Canvas>
            <ZoomBar>
              <Select $width="156px">
                <select aria-label="Zoom" defaultValue="100%">
                  <option>100%</option>
                </select>
                <Arrow><Triangle dir="down" size={8} /></Arrow>
              </Select>
              <ZoomSlider>
                <input
                  type="range"
                  aria-label="Zoom level"
                  value={zoom}
                  onChange={(e) => setZoom(e.target.value)}
                />
                <Ticks />
              </ZoomSlider>
              <ZoomEnd />
            </ZoomBar>
          </Editor>

          <Inspector>
            <PanelHeader>
              <span>Main [OB1]</span>
              <Spacer />
              <ViewTabs>
                <ViewTab type="button" $active $width="112px">
                  <Icon name="propTab" />Properties
                </ViewTab>
                <ViewTab type="button" $width="76px">
                  <Icon name="infoTab" />Info<Spacer /><Icon name="infoBadge" />
                </ViewTab>
                <ViewTab type="button" $width="121px">
                  <Icon name="diag" />Diagnostics
                </ViewTab>
              </ViewTabs>
              <svg width="48" height="12" viewBox="0 0 48 12" aria-label="Window buttons">
                <path d="M0 3h8v8H0zM3 0h8v8H9V2H3zM36 3h12l-6 6z" fill="#fff" />
                <path d="M18.500 .5h10v10h-10zM19 2.500h10M19 4.500h10M19 6.500h10M19 8.500h10" stroke="#eee" fill="none" />
              </svg>
            </PanelHeader>
            <TabStrip>
              <Tab type="button">General</Tab>
            </TabStrip>
            <InspectorBody>
              <Nav>
                {NAV.map((label, i) => (
                  <NavRow key={label}>
                    <NavLink href="#" $active={i === 0}>{label}</NavLink>
                  </NavRow>
                ))}
              </Nav>
              <NavSplit>
                <SideNub type="button" aria-label="Hide navigation">
                  <Triangle dir="left" size={6} />
                </SideNub>
                <SideNub type="button" aria-label="Show navigation">
                  <Triangle dir="right" size={6} />
                </SideNub>
              </NavSplit>
              <Properties>
                <Heading>
                  General
                  <Rule />
                </Heading>
                <Form>
                  <label htmlFor="name">Name:</label>
                  <Field id="name" value={name} onChange={(e) => setName(e.target.value)} />
                  <label htmlFor="constant">Constant name:</label>
                  <Field id="constant" value={constant} onChange={(e) => setConstant(e.target.value)} />
                  <label htmlFor="type">Type:</label>
                  <Field id="type" value="OB" readOnly />
                  <label htmlFor="event">Event class:</label>
                  <Field id="event" value="Program cycle" readOnly />
                  <label htmlFor="language">Language:</label>
                  <Select>
                    <select id="language" defaultValue="LAD">
                      <option>LAD</option>
                      <option>FBD</option>
                    </select>
                    <Arrow><Triangle dir="down" size={8} /></Arrow>
                  </Select>
                  <label htmlFor="number">Number:</label>
                  <NumberBox>
                    <input id="number" type="number" defaultValue="1" disabled />
                    <Spinner>
                      <Triangle dir="up" size={8} color="#808080" />
                      <Triangle dir="down" size={8} color="#808080" />
                    </Spinner>
                  </NumberBox>
                  <Radios>
                    {["manual", "automatic"].map((value) => (
                      <Choice key={value}>
                        <Radio
                          name="numbering"
                          checked={mode === value}
                          onChange={() => setMode(value)}
                        />
                        {value}
                      </Choice>
                    ))}
                  </Radios>
                </Form>
              </Properties>
              <Scroll thumb="23px" />
            </InspectorBody>
          </Inspector>
        </RightColumn>
      </Workspace>
    </Root>
  );
};

export default App;

const GlobalStyle = createGlobalStyle`
  * {
    box-sizing: border-box;
  }
  body {
    margin: 0;
    color: #000;
    font: 12px/16px "Open Sans", "Noto Sans", sans-serif;
  }
  button, input, select {
    margin: 0;
    padding: 0;
    border: 0;
    color: inherit;
    background: none;
    font: inherit;
  }
  svg {
    display: block;
    flex: none;
  }
`;

const Root = styled.div`
  display: flex;
  flex-direction: column;
  height: 100vh;
  overflow: hidden;
  background: #cccccc;
  border-bottom: 2px solid #1a1a1a;
`;

const IconSvg = styled.svg`
  width: 16px;
  height: 16px;
  overflow: visible;
`;

const Spacer = styled.div`
  flex: 1;
`;

const TitleBar = styled.header`
  display: flex;
  align-items: center;
  gap: 6px;
  height: 21px;
  flex: none;
  padding-left: 4px;
  background: linear-gradient(#9a9a9a, #707070 5px, #565656 5px, #4c4c4c);
  border-bottom: 1px solid #000;
`;

const Logo = styled.svg`
  width: 16px;
  height: 16px;
  overflow: visible;
`;

const LogoText = styled.text`
  font-size: 8px;
  font-weight: 700;
  text-anchor: middle;
`;

const Title = styled.h1`
  margin: 0;
  padding-bottom: 2px;
  color: #fff;
  font-size: 12px;
  font-weight: 700;
  white-space: pre;
`;

const MenuBar = styled.nav`
  display: flex;
  gap: 16px;
  height: 27px;
  flex: none;
  padding: 0 10px;
`;

const MenuBtn = styled.button`
  color: #808080;
`;

const MainTools = styled.div`
  display: flex;
  align-items: center;
  height: 24px;
  flex: none;
  padding: 0 0 3px 7px;
  border-bottom: 1px solid #1a2030;
`;

const ToolBtn = styled.button`
  display: flex;
  align-items: center;
  justify-content: center;
  width: 24px;
  height: 22px;
  flex: none;
  border: 1px solid transparent;
  border-width: 0 1px;

  ${({ $boxed }) =>
    $boxed &&
    css`
      width: 22px;
      margin: 0 1px;
      background: #fff;
      border: 1px solid #2f62d0;
      border-radius: 1px;
    `}

  ${({ $filled }) =>
    $filled &&
    css`
      width: 22px;
      margin: 0 1px;
      background: #c2ccd6;
    `}
`;

const MoreBtn = styled.button`
  display: flex;
  align-items: center;
  justify-content: center;
  width: 11px;
  height: 22px;
`;

const LabelBtn = styled.button`
  display: flex;
  align-items: center;
  gap: 5px;
  padding: 0 4px 0 2px;
  color: #808080;
  white-space: nowrap;
`;

const Sep = styled.span`
  width: 1px;
  height: 22px;
  margin: 0 2px;
  background: repeating-linear-gradient(#8c8c8c 0 1px, transparent 1px 2px);
`;

const Workspace = styled.main`
  display: flex;
  flex: 1;
  min-height: 0;
`;

const Strip = styled.aside`
  width: 22px;
  flex: none;
  padding-top: 24px;
  background: #b0b0b0;
  border-right: 1px solid #1a2030;
`;

const StripTab = styled.button`
  display: flex;
  align-items: center;
  justify-content: center;
  width: 100%;
  height: 223px;
  padding: 0 0 8px 4px;
  color: #fff;
  font-size: 12px;
  font-weight: 700;
  writing-mode: vertical-rl;
  transform: rotate(180deg);
  border: solid #fff;
  border-width: 1px 0;
`;

const LeftColumn = styled.section`
  display: flex;
  flex-direction: column;
  width: 418px;
  flex: none;
  border-right: 3px solid #1a2030;
`;

const RightColumn = styled.section`
  display: flex;
  flex-direction: column;
  flex: 1;
  min-width: 0;
  border-right: 1px solid #1a2030;
`;

const PanelHeader = styled.header`
  display: flex;
  align-items: center;
  height: 27px;
  flex: none;
  padding: 0 5px;
  color: #fff;
  font-size: 13px;
  font-weight: 700;
  background: #b0b0b0;
  border-bottom: 3px solid #ececec;
`;

const HeaderIcons = styled.div`
  display: flex;
  gap: 7px;
`;

const Crumbs = styled.div`
  display: flex;
  align-items: center;
  gap: 8px;
`;

const TabStrip = styled.div`
  display: flex;
  align-items: flex-end;
  height: 25px;
  flex: none;
  padding-left: 6px;
  background: #cccccc;
  border-bottom: 1px solid #707070;
`;

const Tab = styled.button`
  height: 22px;
  min-width: 83px;
  margin-bottom: -1px;
  padding: 0 12px 3px;
  font-size: 13px;
  font-weight: 600;
  text-align: left;
  background: linear-gradient(#f6f6f6, #f0f0f0 50%, #e8e8e8 50%);
  border: 1px solid #707070;
  border-bottom: 0;
`;

const Toolbar = styled.div`
  display: flex;
  align-items: center;
  height: 27px;
  flex: none;
  padding: ${({ $tight }) => ($tight ? "0 3px" : "0 11px 0 8px")};
  background: #e9e9e9;
`;

const TreeTop = styled.div`
  height: 21px;
  flex: none;
  background: #c2c2c2;
`;

const Tree = styled.div`
  padding-bottom: 2px;
  background: #f0f0f0;
  overflow: hidden;
`;

const TreeRow = styled.div`
  display: flex;
  height: 19px;
  border-bottom: 1px solid #fff;
  background: ${({ $group, $selected, $hover }) =>
    ($selected && "#d5dce1") || ($hover && "#d5e2e8") || ($group && "#e1e1e1") || "#f0f0f0"};
`;

const TreeName = styled.div`
  display: flex;
  align-items: center;
  flex: 1;
  min-width: 0;
  padding-left: ${({ $level }) => 4 + $level * 18}px;
  white-space: nowrap;
  font-weight: ${({ $strong }) => ($strong ? 500 : 400)};
  outline: ${({ $selected }) => ($selected ? "1px dashed #808080" : "none")};
  outline-offset: -1px;

  span {
    margin-left: 4px;
  }
`;

const Expander = styled.i`
  width: 15px;
  flex: none;
`;

const TreeState = styled.div`
  display: flex;
  align-items: center;
  width: 21px;
  flex: none;
  padding-left: 2px;
  border-left: 1px solid #c4c4c4;
  box-shadow: inset 1px 0 #fff;
`;

const DetailsHeader = styled.header`
  display: flex;
  align-items: center;
  gap: 4px;
  height: 24px;
  flex: none;
  font-size: 13px;
  font-weight: 700;
  background: linear-gradient(#e4e4e4, #d6d6d6);
  border-top: 3px solid #1a2030;
  border-bottom: 1px solid #707070;
`;

const Fold = styled.button`
  display: flex;
  align-items: center;
  justify-content: center;
  width: 21px;
  height: 20px;
  border-right: 1px solid #707070;
`;

const Details = styled.div`
  flex: 1;
  min-height: 0;
  padding-top: 25px;
  background:
    linear-gradient(#e9e9e9, #e9e9e9) 0 0 / 100% 25px no-repeat,
    repeating-linear-gradient(#f0f0f0 0 18px, #fff 18px 19px) 0 44px;
`;

const DetailsTable = styled.table`
  width: 100%;
  table-layout: fixed;
  border-collapse: collapse;
`;

const Th = styled.th`
  width: ${({ $width }) => $width || "auto"};
  height: 19px;
  padding: 0 3px;
  font-weight: 400;
  text-align: left;
  background: linear-gradient(#e2e2e2, #dadada 50%, #cbcbcb 50%, #dcdcdc);
  border: solid #a0a0a0;
  border-width: 1px 1px 1px 0;

  &:last-child {
    border-right: 0;
  }
`;

const Editor = styled.section`
  display: flex;
  flex-direction: column;
  flex: 1;
  min-height: 0;
  background: #e9e9e9;
`;

const InterfaceBar = styled.div`
  height: 19px;
  flex: none;
  color: #fff;
  font-weight: 600;
  line-height: 18px;
  text-align: center;
  background: #b0b0b0;
  border-bottom: 1px solid #888;
`;

const InterfaceSplit = styled.div`
  display: flex;
  justify-content: center;
  gap: 10px;
  height: 7px;
  flex: none;
  background: #d9d9d9;
  border-bottom: 1px solid #888;
  box-shadow: inset 0 -1px #fff;
`;

const SplitNub = styled.button`
  display: flex;
  justify-content: center;
  width: 24px;
  height: 5px;
  background: ${({ $dark }) => ($dark ? "#bcbcbc" : "#e0e0e0")};
  border: solid #888;
  border-width: 0 1px;
`;

const Instructions = styled.div`
  display: flex;
  gap: 2px;
  flex: none;
  padding: 2px 2px 4px;
`;

const Instruction = styled.button`
  display: flex;
  align-items: center;
  justify-content: center;
  width: 32px;
  height: 32px;
  background: #fff;
`;

const Canvas = styled.div`
  display: flex;
  flex: 1;
  min-height: 0;
`;

const Networks = styled.div`
  flex: 1;
  min-width: 0;
  overflow: hidden;
  background: #fff;
`;

const Bar = styled.div`
  display: flex;
  align-items: center;
  height: 21px;
  padding: 0 0 2px 4px;
  background: #d9d9d9;

  strong {
    margin: 0 12px 0 ${({ $indent }) => $indent};
    font-size: 13px;
    font-weight: 600;
  }
`;

const Dots = styled.span`
  color: #808080;
`;

const Note = styled.input`
  display: block;
  width: 100%;
  height: 20px;
  padding: 0 2px 4px;
  border: solid #ebebeb;
  border-width: 1px 0 0 1px;

  &::placeholder {
    color: #808080;
    opacity: 1;
  }
`;

const BlockNote = styled.div`
  width: 568px;
  padding: 0 0 10px 14px;
`;

const NetworkNote = styled.div`
  width: 568px;
  margin-left: 20px;
  padding: 5px 0 2px 14px;
  border-bottom: 1px solid #c9c6ea;
`;

const LadderSvg = styled.svg`
  margin-left: 20px;
  fill: none;
  stroke: #000;
  stroke-width: 2px;
`;

const Address = styled.text`
  fill: #089a9a;
  stroke: none;
  font-weight: 600;
  text-anchor: middle;
`;

const Tag = styled.text`
  fill: #000;
  stroke: none;
  text-anchor: middle;
`;

const ScrollBar = styled.div`
  display: flex;
  flex-direction: column;
  gap: 1px;
  width: 18px;
  flex: none;
  background: #c2c2c2;
`;

const ScrollBtn = styled.button`
  display: flex;
  align-items: center;
  justify-content: center;
  width: 18px;
  height: 18px;
  flex: none;
  background: linear-gradient(90deg, #f2f2f2, #d6d6d6);
  border: 1px solid #808080;
  box-shadow: inset 0 0 0 1px #fff;
`;

const Thumb = styled.div`
  display: flex;
  align-items: center;
  justify-content: center;
  height: ${({ $height }) => $height};
  flex: none;
  background: linear-gradient(90deg, #ededed, #cfcfcf);
  border: 1px solid #808080;
  box-shadow: inset 0 0 0 1px #fff;
`;

const ZoomBar = styled.div`
  display: flex;
  justify-content: flex-end;
  height: 18px;
  flex: none;
`;

const Select = styled.div`
  display: grid;
  width: ${({ $width }) => $width || "100%"};
  height: 18px;
  background: #fff;
  border: 1px solid #888;

  select {
    grid-area: 1 / 1;
    padding: 0 20px 0 3px;
    appearance: none;
    line-height: 16px;
  }
`;

const Arrow = styled.span`
  display: flex;
  align-items: center;
  justify-content: center;
  grid-area: 1 / 1;
  justify-self: end;
  width: 16px;
  height: 16px;
  pointer-events: none;
  background: linear-gradient(#fafafa, #e4e4e4 50%, #cfcfcf 50%, #e0e0e0);
  border-left: 1px solid #888;
`;

const ZoomSlider = styled.div`
  display: flex;
  flex-direction: column;
  width: 67px;
  margin: 0 17px 0 18px;

  input {
    width: 100%;
    height: 14px;
    appearance: none;
    background: linear-gradient(#666, #666) 0 8px / 100% 1px no-repeat;
  }

  input::-webkit-slider-thumb {
    width: 8px;
    height: 10px;
    appearance: none;
    background: #e4e4e4;
    border: 1px solid #777;
    border-radius: 0 0 4px 4px;
  }
`;

const Ticks = styled.div`
  height: 3px;
  background: repeating-linear-gradient(90deg, #222 0 1px, transparent 1px 5px);
`;

const ZoomEnd = styled.div`
  width: 18px;
  background: #c2c2c2;
`;

const Inspector = styled.section`
  flex: none;
  border-top: 3px solid #1a2030;
`;

const ViewTabs = styled.div`
  display: flex;
  align-self: flex-end;
  gap: 1px;
  margin-right: 20px;
`;

const ViewTab = styled.button`
  display: flex;
  align-items: center;
  gap: 4px;
  width: ${({ $width }) => $width};
  height: 21px;
  padding: 0 3px 0 2px;
  color: ${({ $active }) => ($active ? "#000" : "#666")};
  font-size: 12px;
  font-weight: 600;
  background: ${({ $active }) =>
    $active
      ? "linear-gradient(#f4f4f4, #e9e9e9)"
      : "linear-gradient(#d4d4d4 50%, #c6c6c6 50%)"};
  border: 1px solid #707070;
  border-width: ${({ $active }) => ($active ? "0 1px" : "1px 1px 0")};
`;

const InspectorBody = styled.div`
  display: flex;
  background: #e9e9e9;
`;

const Nav = styled.ul`
  width: 198px;
  flex: none;
  margin: 2px 0 0;
  padding: 0;
  list-style: none;
  background: repeating-linear-gradient(#f0f0f0 0 18px, #e6e6e6 18px 19px);
`;

const NavRow = styled.li`
  height: 19px;
  padding: 1px 17px 0;
`;

const NavLink = styled.a`
  display: inline-block;
  height: 18px;
  padding: 0 2px;
  color: #000;
  line-height: 18px;
  text-decoration: none;
  background: ${({ $active }) => ($active ? "#c2ccd6" : "none")};
`;

const NavSplit = styled.div`
  display: flex;
  flex-direction: column;
  justify-content: center;
  gap: 10px;
  width: 8px;
  flex: none;
  margin-top: 2px;
  background: #e0e0e0;
  border: solid #888;
  border-width: 1px 1px 0;
  box-shadow: inset -1px 0 #fff;
`;

const SideNub = styled.button`
  width: 6px;
  height: 24px;
  background: #c4c4c4;
  border: solid #888;
  border-width: 1px 0;
`;

const Properties = styled.div`
  flex: 1;
  min-width: 0;
  padding: 0 6px 10px 12px;
`;

const Heading = styled.h2`
  display: flex;
  align-items: center;
  gap: 13px;
  height: 38px;
  margin: 0;
  padding: 6px 0 0 3px;
  font-size: 13px;
  font-weight: 600;
`;

const Rule = styled.span`
  flex: 1;
  height: 14px;
  border-bottom: 1px solid #000;
`;

const Form = styled.form`
  display: grid;
  grid-template-columns: 194px 1fr;
  gap: 6px 10px;
  padding: 24px 12px 14px 0;
  line-height: 18px;
  background: #cccccc;

  label {
    text-align: right;
  }
`;

const Field = styled.input`
  width: 100%;
  height: 18px;
  padding: 0 3px;
  background: ${({ readOnly }) => (readOnly ? "#e1e1e1" : "#fff")};
  border: 1px solid #888;
`;

const NumberBox = styled.div`
  display: flex;
  width: 180px;
  height: 18px;
  border: 1px solid #888;

  input {
    flex: 1;
    min-width: 0;
    padding: 0 4px;
    color: #7c7c7c;
    appearance: textfield;
  }

  input::-webkit-inner-spin-button {
    appearance: none;
  }
`;

const Spinner = styled.span`
  display: flex;
  flex-direction: column;
  align-items: center;
  width: 17px;
  background: #e4e4e4;
  border-left: 1px solid #888;
`;

const Radios = styled.div`
  display: flex;
  flex-direction: column;
  gap: 8px;
  grid-column: 2;
`;

const Choice = styled.label`
  display: flex;
  align-items: center;
  gap: 4px;
  height: 16px;
`;

const Radio = styled.input.attrs({ type: "radio" })`
  width: 15px;
  height: 15px;
  appearance: none;
  background: linear-gradient(#dcdcdc, #f6f6f6);
  border: 1px solid #666;
  border-radius: 50%;

  &:checked {
    background:
      radial-gradient(circle, #0c3c78 0 2px, transparent 3px),
      linear-gradient(#2a6cc0, #e6f2fa 40%, #4cc8f0);
    border-color: #1c5a98;
  }
`;
